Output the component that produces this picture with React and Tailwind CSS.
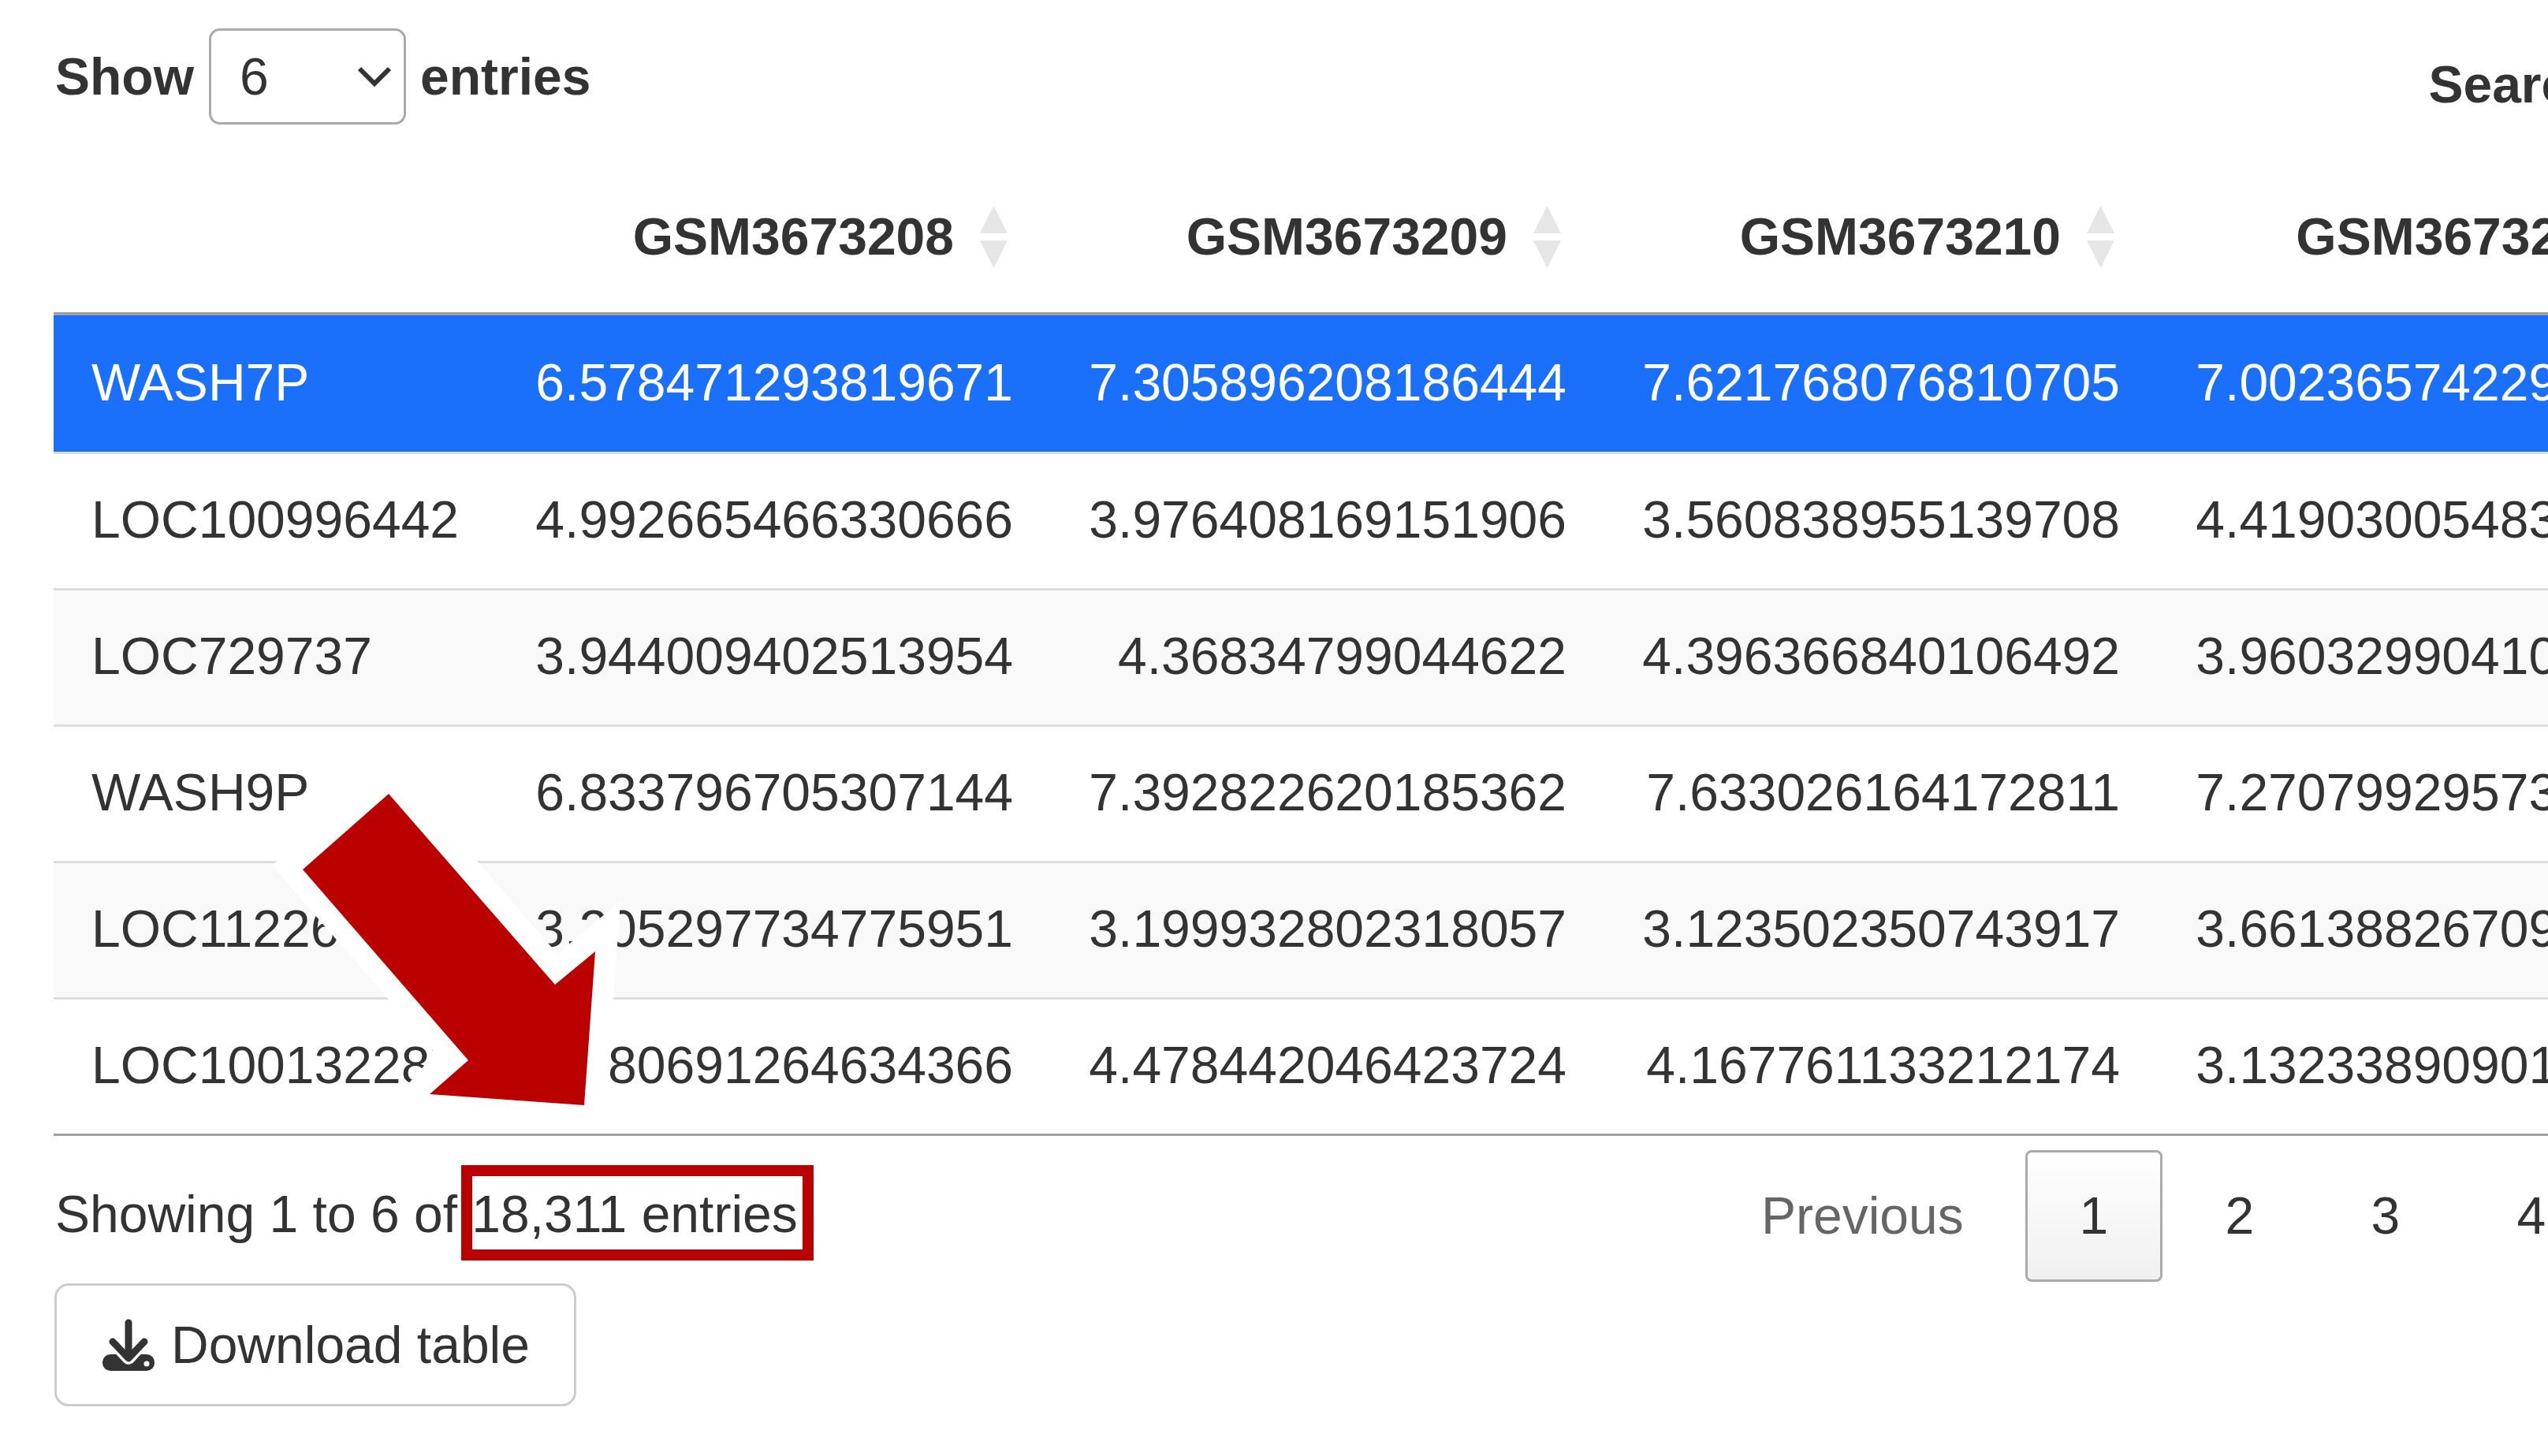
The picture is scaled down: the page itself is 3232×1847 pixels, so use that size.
const columns = ['GSM3673208', 'GSM3673209', 'GSM3673210', 'GSM3673211'];

const rows = [
  { gene: 'WASH7P', values: ['6.578471293819671', '7.305896208186444', '7.621768076810705', '7.002365742291234'] },
  { gene: 'LOC100996442', values: ['4.992665466330666', '3.976408169151906', '3.560838955139708', '4.419030054831287'] },
  { gene: 'LOC729737', values: ['3.944009402513954', '4.36834799044622', '4.396366840106492', '3.960329904101528'] },
  { gene: 'WASH9P', values: ['6.833796705307144', '7.392822620185362', '7.633026164172811', '7.270799295731946'] },
  { gene: 'LOC112268260', values: ['3.205297734775951', '3.199932802318057', '3.123502350743917', '3.661388267091452'] },
  { gene: 'LOC100132287', values: ['3.980691264634366', '4.478442046423724', '4.167761133212174', '3.132338909012345'] },
];

function SortArrows() {
  return (
    <svg width="35" height="79" viewBox="0 0 35 79" className="shrink-0">
      <path d="M17.5 0 35 35H0z" fill="#e6e6e6" />
      <path d="M0 44h35L17.5 79z" fill="#e6e6e6" />
    </svg>
  );
}

function DownloadIcon() {
  return (
    <svg width="66" height="66" viewBox="0 0 66 66" fill="none" strokeLinecap="round" strokeLinejoin="round" className="shrink-0">
      <rect x="0" y="45" width="66" height="21" rx="10" fill="#333" />
      <path d="M20 36l13 14 13-14" stroke="#fff" strokeWidth="16" />
      <path d="M33 5v44M13 29l20 21 20-21" stroke="#333" strokeWidth="9" />
      <circle cx="56" cy="57" r="3.5" fill="#fff" />
    </svg>
  );
}

function RowCells({ row, index }) {
  const active = index === 0;
  const striped = index === 2 || index === 4;
  const bg = active ? 'bg-[#1a70fb] text-white' : striped ? 'bg-[#f9f9f9] text-[#333]' : 'bg-white text-[#333]';
  const border = index === 0 ? '' : 'border-t-[3px] border-[#ddd]';
  return (
    <tr className={bg}>
      <td className={`h-[173px] pl-[48px] pb-[3px] ${border}`}>{row.gene}</td>
      {row.values.map((value, i) => (
        <td key={i} className={`h-[173px] pr-[48px] pb-[3px] text-right ${border}`}>{value}</td>
      ))}
    </tr>
  );
}

export default function App() {
  return (
    <div className="relative w-[3232px] h-[1847px] overflow-hidden bg-white text-[66px] text-[#333] font-['Liberation_Sans',Arial,sans-serif]">
      {/* length + search */}
      <div className="flex items-center h-[120px] mt-[37px] ml-[70px] font-bold whitespace-nowrap">
        <span className="shrink-0">Show</span>
        <div className="flex items-center justify-between shrink-0 w-[250px] h-[122px] ml-[19px] pl-[36px] pr-[16px] border-[3px] border-[#aaa] rounded-[14px] font-normal">
          <span>6</span>
          <svg width="42" height="26" viewBox="0 0 42 26" fill="none" stroke="#333" strokeWidth="6">
            <path d="m2 3 19 19L40 3" />
          </svg>
        </div>
        <span className="ml-[18px] shrink-0">entries</span>
        <span className="ml-[2331px] mt-[20px] shrink-0">Search:</span>
      </div>

      <table className="table-fixed border-separate border-spacing-0 ml-[68px] mt-[48px] w-[3371px]">
        <colgroup>
          <col className="w-[564px]" />
          <col className="w-[701px]" />
          <col className="w-[702px]" />
          <col className="w-[702px]" />
          <col className="w-[702px]" />
        </colgroup>
        <thead>
          <tr>
            <th className="h-[195px] border-b-[4px] border-[#a0a0a0]" />
            {columns.map((name) => (
              <th key={name} className="h-[195px] pr-[55px] border-b-[4px] border-[#a0a0a0] font-bold">
                <div className="flex items-center justify-end gap-[33px]">
                  <span>{name}</span>
                  <SortArrows />
                </div>
              </th>
            ))}
          </tr>
        </thead>
        <tbody>
          {rows.map((row, i) => (
            <RowCells key={row.gene} row={row} index={i} />
          ))}
        </tbody>
      </table>
      <div className="h-[3px] ml-[68px] bg-[#a0a0a0]" />

      {/* info + pagination */}
      <div className="flex items-center mt-[18px] ml-[70px] h-[167px]">
        <span className="w-[2164px] shrink-0 pb-[4px]">Showing 1 to 6 of 18,311 entries</span>
        <div className="flex items-center gap-[11px] shrink-0">
          <span className="pr-[67px] text-[#666]">Previous</span>
          <span className="flex items-center justify-center w-[174px] h-[167px] border-[3px] border-[#aaa] rounded-[8px] bg-gradient-to-b from-white to-[#f0f0f0]">1</span>
          <span className="flex items-center justify-center w-[174px] h-[167px]">2</span>
          <span className="flex items-center justify-center w-[174px] h-[167px]">3</span>
          <span className="flex items-center justify-center w-[174px] h-[167px]">4</span>
        </div>
      </div>

      <div className="flex items-center gap-[21px] w-[662px] h-[156px] mt-[2px] ml-[69px] pl-[58px] border-[3px] border-[#ccc] rounded-[18px]">
        <DownloadIcon />
        <span>Download table</span>
      </div>

      {/* annotation drawn over the table */}
      <svg className="absolute left-0 top-0 pointer-events-none" width="3232" height="1847" viewBox="0 0 3232 1847">
        <path d="M345 1098 493 965l110 125 104 120 80-67-9 125-8 157-270-30 52-59z" fill="#fff" />
        <path d="M384 1103 493 1007l211 242 51-42-14 195-196-14 49-43z" fill="#bb0000" />
      </svg>
      <div className="absolute left-[585px] top-[1478px] w-[447px] h-[121px] border-[14px] border-[#bb0000]" />
    </div>
  );
}
